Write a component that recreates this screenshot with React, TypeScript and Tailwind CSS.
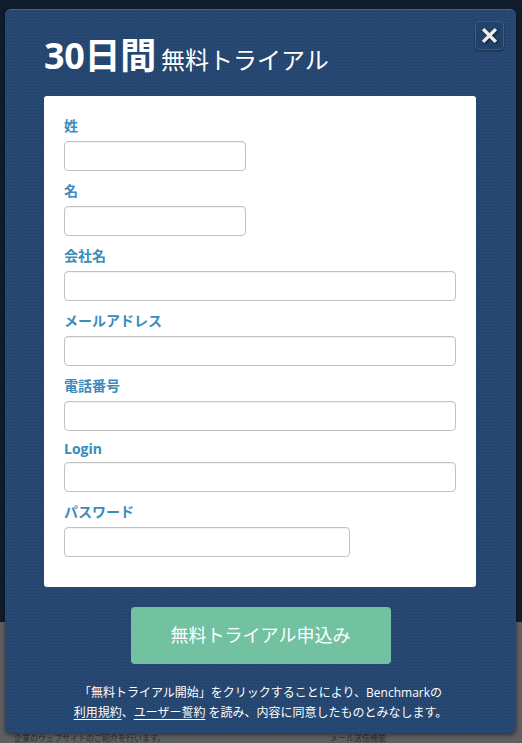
import React from 'react';

const font = 'font-["Open_Sans","Noto_Sans_CJK_JP",sans-serif]';

type FieldProps = { label: string; width: string; latin?: boolean };

function Field({ label, width, latin }: FieldProps) {
  return (
    <div className="flex flex-col">
      <label
        className={`text-[14px] font-bold text-[#3b8bbb] mb-[5px] ${latin ? 'leading-[16px]' : 'leading-[20px]'}`}
      >
        {label}
      </label>
      <input
        type="text"
        className={`${width} h-[30px] rounded-[4px] border border-[#c2c2c2] bg-white shadow-[inset_0_1px_1px_rgba(0,0,0,0.06)] outline-none`}
      />
    </div>
  );
}

export default function App() {
  return (
    <div className={`relative w-[522px] h-[743px] overflow-hidden bg-[#0f1d2c] ${font}`}>
      {/* page behind the overlay */}
      <div className="absolute left-0 right-0 bottom-0 h-[121px] bg-[#5e5f60]">
        <div className="absolute left-[14px] bottom-[1px] text-[8px] leading-[8px] text-[#2d2d2d] whitespace-nowrap">
          企業のウェブサイトのご紹介を行います。
        </div>
        <div className="absolute left-[330px] bottom-[1px] text-[8px] leading-[8px] text-[#2d2d2d] whitespace-nowrap">
          メール送信機能
        </div>
      </div>

      {/* modal */}
      <div className="absolute left-[5px] top-[9px] w-[511px] h-[724px] rounded-[6px] border-t border-[#3d6896] bg-[#264872] bg-[radial-gradient(rgba(20,40,70,0.35)_1px,transparent_1px)] bg-size-[3px_3px] shadow-[0_2px_4px_rgba(0,0,0,0.5)] px-[39px] pt-[28px]">
        <button className="absolute right-[12px] top-[11px] w-[29px] h-[29px] rounded-[4px] border border-[#3a5f8a] bg-[#22426b] flex items-center justify-center shadow-[0_1px_2px_rgba(0,0,0,0.4)]">
          <svg width="17" height="17" viewBox="0 0 18 18" className="drop-shadow-[1px_1px_1px_rgba(0,0,0,0.6)]">
            <path d="M3.5 3.5 L14.5 14.5 M14.5 3.5 L3.5 14.5" stroke="#ececec" strokeWidth="3.6" strokeLinecap="square" />
          </svg>
        </button>

        <h1 className="flex items-baseline text-white leading-none h-[58px]">
          <span className="text-[36px] font-bold tracking-[-0.3px]">30日間</span>
          <span className="text-[24px] ml-[5px]">無料トライアル</span>
        </h1>

        <div className="w-[432px] bg-white rounded-[3px] px-[20px] pt-[20px] pb-[30px] flex flex-col gap-[10px]">
          <Field label="姓" width="w-[182px]" />
          <Field label="名" width="w-[182px]" />
          <Field label="会社名" width="w-[392px]" />
          <Field label="メールアドレス" width="w-[392px]" />
          <Field label="電話番号" width="w-[392px]" />
          <Field label="Login" width="w-[392px]" latin />
          <Field label="パスワード" width="w-[286px]" />
        </div>

        <div className="flex justify-center mt-[20px]">
          <button className="w-[260px] h-[57px] rounded-[4px] bg-[#72c1a1] text-white text-[18px]">
            無料トライアル申込み
          </button>
        </div>

        <p className="mt-[19px] text-center text-white text-[12px] leading-[20px]">
          「無料トライアル開始」をクリックすることにより、Benchmarkの
          <br />
          <a className="underline underline-offset-2">利用規約</a>、<a className="underline underline-offset-2">ユーザー誓約</a> を読み、内容に同意したものとみなします。
        </p>
      </div>
    </div>
  );
}
